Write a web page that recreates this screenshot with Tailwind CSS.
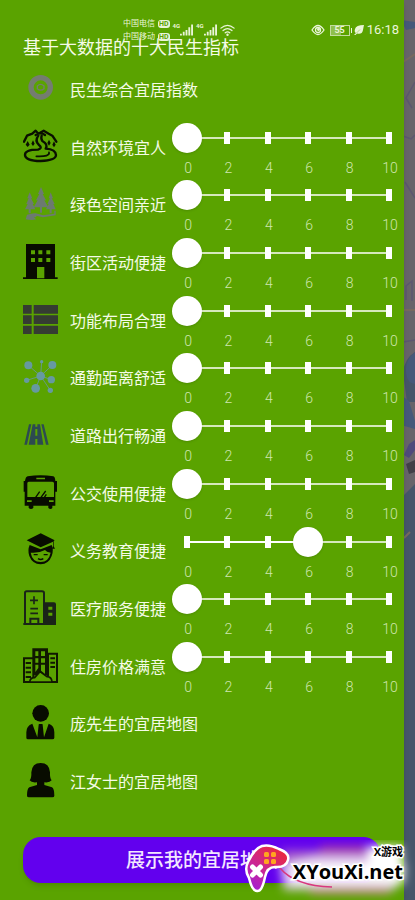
<!DOCTYPE html>
<html lang="zh-CN">
<head>
<meta charset="utf-8">
<meta name="viewport" content="width=device-width, initial-scale=1">
<title>民生指标</title>
<script src="https://cdn.jsdelivr.net/npm/@tailwindcss/browser@4"></script>
</head>
<body class="relative min-h-screen overflow-x-hidden bg-[#46566a] font-['Roboto','Noto_Sans_CJK_SC',sans-serif] text-[#f4fbe6]">

<!-- dimmed map behind the drawer -->
<svg class="absolute top-0 right-0 h-[900px] w-[14px]" viewBox="0 0 14 900" preserveAspectRatio="none" fill="none" aria-hidden="true">
  <path fill="#67646a" d="M0 0h14v352q-10 6-12 20l4 30h8v82l-14 14z"/>
  <path fill="#46597a" d="M0 20l14 2v6L5 30zM14 352q-10 8-9 20t9 12zM0 395l8 6 6 20v8l-14-4z"/>
  <path stroke="#77695f" stroke-width="2" d="M2 62l12-8M2 310h12M3 538l6-6"/>
  <path stroke="#5c5770" stroke-width="1.500" d="M2 136l8 3 4-4M4 182l10 16M14 82l-9 16 6 10M5 300V286l6-5v20M2 342l12-2"/>
  <path fill="#4f4a7c" d="M3 455l5-11 6-4v10l-6 8z"/>
  <path fill="#413f48" d="M5 464l9-4v12l-6 2z"/>
</svg>

<div class="relative mr-[11px] flex min-h-screen flex-col bg-[#5aa300] pt-9 pb-[17px] shadow-md">
  <h1 class="pl-[23px] text-[18px] leading-6">基于大数据的十大民生指标</h1>
  <ul id="list" class="mt-px grid min-h-[750px] auto-rows-fr pl-[23px]"></ul>
  <div class="pt-[26px] pr-[23px] pl-[23px]">
    <button type="button" class="h-[46px] w-full rounded-[18px] bg-[#6200ee] pt-[3px] text-[19px] font-medium text-[#f3e6ff] shadow-md">展示我的宜居地图</button>
  </div>
</div>

<!-- system status bar, drawn over the drawer -->
<div class="absolute inset-x-0 top-[18px] flex h-6 items-center pr-4 pl-[123px] text-[#eaf5d8]">
  <div class="flex flex-col gap-1 text-[8px] leading-[9px]">
    <span class="flex items-center gap-[3px]">中国电信<b class="rounded-[3px] bg-[#eaf5d8] px-px text-[7px] leading-[8px] text-[#5aa300]">HD</b></span>
    <span class="flex items-center gap-[3px]">中国移动<b class="rounded-[3px] bg-[#eaf5d8] px-px text-[7px] leading-[8px] text-[#5aa300]">HD</b></span>
  </div>
  <span class="ml-[3px] self-start pt-1 text-[6px] leading-[8px] font-bold">4G</span>
  <svg class="h-3 w-[13px]" viewBox="0 0 14 12" fill="currentColor"><path d="M0 10h2v2H0zM3 8h2v4H3zM6 6h2v6H6zM9 3h2v9H9zM12 0h2v12h-2z"/></svg>
  <span class="ml-[3px] self-start pt-1 text-[6px] leading-[8px] font-bold">4G</span>
  <svg class="h-3 w-[13px]" viewBox="0 0 14 12" fill="currentColor"><path d="M0 10h2v2H0zM3 8h2v4H3zM6 6h2v6H6zM9 3h2v9H9zM12 0h2v12h-2z"/></svg>
  <svg class="ml-[3px] h-3 w-[15px]" viewBox="0 0 16 12" fill="none" stroke="currentColor" stroke-width="1.400" stroke-linecap="round"><path d="M1 4q7-6 14 0M3.300 6.500q4.700-4 9.400 0M5.600 9q2.400-2 4.800 0"/><circle cx="8" cy="11" r=".6" fill="currentColor"/></svg>
  <svg class="ml-auto h-3 w-[14px]" viewBox="0 0 14 12" fill="none" stroke="currentColor" stroke-width="1.300"><path d="M1 6q6-9 12 0q-6 9-12 0z"/><circle cx="7" cy="6" r="2.500"/><circle cx="7.500" cy="5.500" r=".8" fill="currentColor"/></svg>
  <span class="ml-[5px] flex h-[11px] w-5 items-center justify-center border border-[#c3dc9e] bg-linear-to-r from-[#8fbf4d] from-55% to-transparent to-55% text-[9px] leading-[9px] font-bold">55</span>
  <span class="ml-px h-[5px] w-px bg-[#eaf5d8]"></span>
  <svg class="ml-0.5 h-[10px] w-[10px]" viewBox="0 0 10 10"><path fill="currentColor" d="M10 0Q2 0 1 4Q0 7 2 8L0 10h1.500L3 8.500Q8 10 9 5Q9.500 2 10 0z"/><path stroke="#5aa300" stroke-width=".4" d="M2.500 8L6 4.500"/></svg>
  <time class="ml-[3px] text-[13px] leading-4">16:18</time>
</div>

<!-- site mark over the lower right corner -->
<div class="absolute top-[840px] right-0 h-[60px] w-[175px] overflow-hidden">
  <svg class="absolute inset-0 h-full w-full" viewBox="0 0 175 60" aria-hidden="true">
    <defs>
      <filter id="soft" x="-30%" y="-50%" width="160%" height="200%"><feGaussianBlur stdDeviation="5"/></filter>
      <linearGradient id="pad" x1="0" y1="1" x2=".7" y2="0"><stop offset="0" stop-color="#9a1fe0"/><stop offset=".45" stop-color="#c7259c"/><stop offset="1" stop-color="#ea2a3e"/></linearGradient>
    </defs>
    <g filter="url(#soft)">
      <path fill="#b56fc4" fill-opacity=".8" d="M42 10H140V30H42z"/>
      <path fill="#e6d3ef" fill-opacity=".9" d="M40 24L75 16H150Q165 14 165 32L155 50H90L44 50z"/>
      <path fill="#c0508a" fill-opacity=".6" d="M80 5h46v8H80z"/>
      <path fill="#fff" d="M52 24H164V43H52zM128 6h34v20h-34z"/>
      <path fill="#e879b4" fill-opacity=".7" d="M70 48h80v6H70z"/>
    </g>
    <path fill="none" stroke="#d8387e" stroke-width="1.500" d="M31 13Q50 14 40 28Q55 46 92 47"/>
    <path fill="url(#pad)" stroke="#fff" stroke-width="2.500" d="M22 6Q29 4 39 9Q50 13 48 20Q46 28 35 27Q27 27 25 37Q22 52 17 51Q12 51 9 38Q4 30 8 22Q14 9 22 6z"/>
    <g fill="#ffa51f"><rect x="24" y="12" width="5" height="5" rx="1.500"/><rect x="31" y="12" width="5" height="5" rx="1.500"/><rect x="24" y="19" width="5" height="5" rx="1.500"/><rect x="31" y="19" width="5" height="5" rx="1.500"/></g>
    <path stroke="#fff" stroke-width="5" stroke-linecap="round" d="M12.500 27l8 8m0-8l-8 8"/>
  </svg>
  <div class="relative flex flex-col items-end pt-1 pr-3 font-['Open_Sans','Noto_Sans_CJK_SC',sans-serif] font-bold text-black [paint-order:stroke_fill] [-webkit-text-stroke:3px_white]">
    <span class="text-[11px] leading-4">X游戏</span>
    <span class="text-[20px] leading-6">XYouXi.net</span>
  </div>
</div>

<script>
const icons = {
  index: '<g fill="none" stroke="#747d70"><circle cx="53" cy="49" r="29" stroke-width="16"/><path stroke-width="4" d="M43 45q10-10 20 0v8q-10 9-20 0z"/></g>',
  nature: '<g fill="none" stroke="#0a1000" stroke-width="7" stroke-linejoin="round" stroke-linecap="round"><path d="M3 38L12 20L28 14L38 5L46 14L62 5L77 14L88 20L100 38M38 18Q53 8 66 18"/><path d="M46 20Q34 36 48 48Q60 57 45 62Q5 62 6 78Q8 96 53 96Q99 94 99 78Q98 61 68 59Q76 46 58 36Q53 30 56 20"/><path stroke-width="5" d="M40 82Q82 84 78 70"/></g><path fill="#0a1000" d="M14 36l6 11-6 7-6-7zM30 34l5 10-5 7-5-7zM78 32l5 10-5 8-5-8zM93 37l5 10-5 8-5-8z"/>',
  trees: '<g fill="#6c7a70"><path d="M54 3l9 21h-4l10 19h-5l12 21H57v16h-6V64H32l12-21h-5l10-19h-4zM20 19l8 18h-4l9 17h-4l8 16H23v12h-6V70H6l8-16h-4l7-17h-4zM83 19l7 18h-4l9 17h-4l7 16H86v12h-6V70H69l8-16h-4l8-17h-4z"/><path d="M12 86q18-6 26-4l22 6 34-5v-9h4v14l-38 6-20-5q2 5-8 5l8 6q-15 4-32 0z"/></g>',
  building: '<path fill="#080c00" fill-rule="evenodd" d="M9 0h87v100h8v5H0v-5h9zM24 19v12h12V19zM46 19v12h12V19zM70 19v12h12V19zM24 42v12h12V42zM46 42v12h12V42zM70 42v12h12V42zM42 69v34h22V69z"/>',
  list: '<path fill="#353c32" d="M0 9h26v26H0zM32 9h73v26H32zM0 40h26v26H0zM32 40h73v26H32zM0 71h26v25H0zM32 71h73v25H32z"/>',
  network: '<path fill="none" stroke="#659a82" stroke-width="3" d="M16 19l37 32 35-33M11 64l42-13 32 11M38 88l15-37 29 43M56 9l-3 42"/><g fill="#6699a0"><circle cx="16" cy="19" r="12"/><circle cx="88" cy="18" r="12"/><circle cx="53" cy="51" r="13"/><circle cx="11" cy="64" r="8"/><circle cx="85" cy="62" r="11"/><circle cx="38" cy="88" r="13"/><circle cx="82" cy="94" r="8"/><circle cx="56" cy="8" r="5"/></g>',
  road: '<path fill="#2d4b50" d="M18 22h7L12 83H4zM29 22h8v7h6v-7h8l10 61H43V66h-6v17H17zM37 36v20h6V36zM55 22h7l15 61h-8z"/>',
  bus: '<path fill="#080c00" fill-rule="evenodd" d="M14 4Q53-3 91 4Q96 5 97 18H102V50H97V92H88V99Q83 105 76 99V92H31V99Q24 105 17 99V92H5V50H2V18H6Q8 5 14 4zM17 20Q13 20 13 25V66H93V25Q93 20 88 20zM40 8v5h26V8zM12 76v5h14v-5zM78 76v5h14v-5z"/><path stroke="#080c00" stroke-width="4" d="M38 67l12-17M54 67l14-19M64 67l6-9"/>',
  school: '<path fill="#080c00" d="M53 4L95 25L92 27V43L96 50H87L90 43V29L53 46L11 25z"/><path fill="#080c00" fill-rule="evenodd" d="M20 39L53 52L86 39Q93 55 86 72Q77 96 53 97Q28 96 19 72Q13 55 20 39zM23 62Q28 90 53 90Q77 90 83 62Q70 60 66 54Q48 64 23 62z"/><path stroke="#080c00" stroke-width="4" fill="none" d="M32 68h12M62 68h12M45 80q8 5 16 0"/>',
  hospital: '<path fill="none" stroke="#1a2418" stroke-width="6" d="M6 102V9Q6 4 11 4H57Q63 4 63 9V102M22 102V86H46V102M1 102H99"/><path stroke="#1a2418" stroke-width="5" d="M33 19v24M21 31h24M22 56h23M22 70h23"/><path fill="#1a2418" fill-rule="evenodd" d="M63 37h30q6 0 6 6v62H63zM76 50v9h12v-9zM76 68v9h12v-9z"/>',
  city: '<path fill="none" stroke="#101800" stroke-width="6" d="M3 102V31H29M31 95V4H72V20M75 85V17H102V102H0M8 45h16M8 59h16M8 73h16M8 87h16M82 31h14M82 44h14M82 57h14"/><path fill="#101800" fill-rule="evenodd" d="M31 4h41v78H31zM37 10v14h9V10zM54 10v14h12V10zM37 31v13h9V31zM54 31v13h12V31zM37 50v22l9-12V50zM54 50v18l12 10V50z"/><path fill="#5aa300" stroke="#101800" stroke-width="5" d="M20 102Q22 88 35 89L51 71L72 86Q86 86 87 102z"/>',
  man: '<circle cx="53" cy="25" r="25" fill="#080c00"/><path fill="#080c00" d="M28 56L43 97L47 59H59L63 97L77 56Q94 61 94 82V98Q94 103 88 103H15Q10 103 10 98V82Q10 62 28 56zM47 57h12l-3 9 4 28-7 8-7-8 4-28z"/>',
  woman: '<path fill="#080c00" d="M20 52Q26 45 25 28Q27 0 53 0Q79 0 81 28Q80 45 86 52Q80 60 64 58V66L87 73Q94 77 94 98Q94 103 88 103H17Q11 103 12 97Q12 77 19 73L42 66V58Q25 60 20 52z"/>'
};
const rows = [
  ['index', '民生综合宜居指数'],
  ['nature', '自然环境宜人', 0],
  ['trees', '绿色空间亲近', 0],
  ['building', '街区活动便捷', 0],
  ['list', '功能布局合理', 0],
  ['network', '通勤距离舒适', 0],
  ['road', '道路出行畅通', 0],
  ['bus', '公交使用便捷', 0],
  ['school', '义务教育便捷', 6],
  ['hospital', '医疗服务便捷', 0],
  ['city', '住房价格满意', 0],
  ['man', '庞先生的宜居地图'],
  ['woman', '江女士的宜居地图']
];
const steps = [0, 2, 4, 6, 8, 10];
const slider = (id, value) => `
  <div class="ml-1.5 flex-1 self-start pt-1">
    <div class="relative h-[30px]">
      <div class="absolute inset-x-[15px] top-[14px] h-[2px] bg-[#d6e8bd]"><div class="h-full bg-white" style="width:${value * 10}%"></div></div>
      <div class="absolute inset-x-[15px] top-[9px] flex justify-between">
        ${steps.map(() => '<span class="flex w-0 justify-center"><i class="h-3 w-1.5 shrink-0 bg-white"></i></span>').join('')}
      </div>
      <input id="${id}" type="range" min="0" max="10" step="2" value="${value}" class="absolute inset-0 m-0 h-[30px] w-full appearance-none bg-transparent [&::-webkit-slider-thumb]:size-[30px] [&::-webkit-slider-thumb]:appearance-none [&::-webkit-slider-thumb]:rounded-full [&::-webkit-slider-thumb]:bg-white [&::-webkit-slider-thumb]:shadow-sm">
    </div>
    <div class="mr-[14px] ml-4 flex justify-between pt-[7px] text-[14px] leading-4 font-light text-[#cfe6ae]">
      ${steps.map(n => `<span class="flex w-0 justify-center">${n}</span>`).join('')}
    </div>
  </div>`;
document.getElementById('list').innerHTML = rows.map(([id, name, value]) => {
  const icon = `<svg class="mb-[3px] size-[35px] shrink-0" viewBox="0 0 105 105" aria-hidden="true">${icons[id]}</svg>`;
  const text = 'ml-3 shrink-0 pt-[2px] text-[16px] leading-6 whitespace-nowrap';
  return value === undefined
    ? `<li class="flex"><a href="#${id}" class="flex items-center">${icon}<span class="${text}">${name}</span></a></li>`
    : `<li class="flex items-center">${icon}<label for="${id}" class="${text}">${name}</label>${slider(id, value)}</li>`;
}).join('');
</script>
</body>
</html>
